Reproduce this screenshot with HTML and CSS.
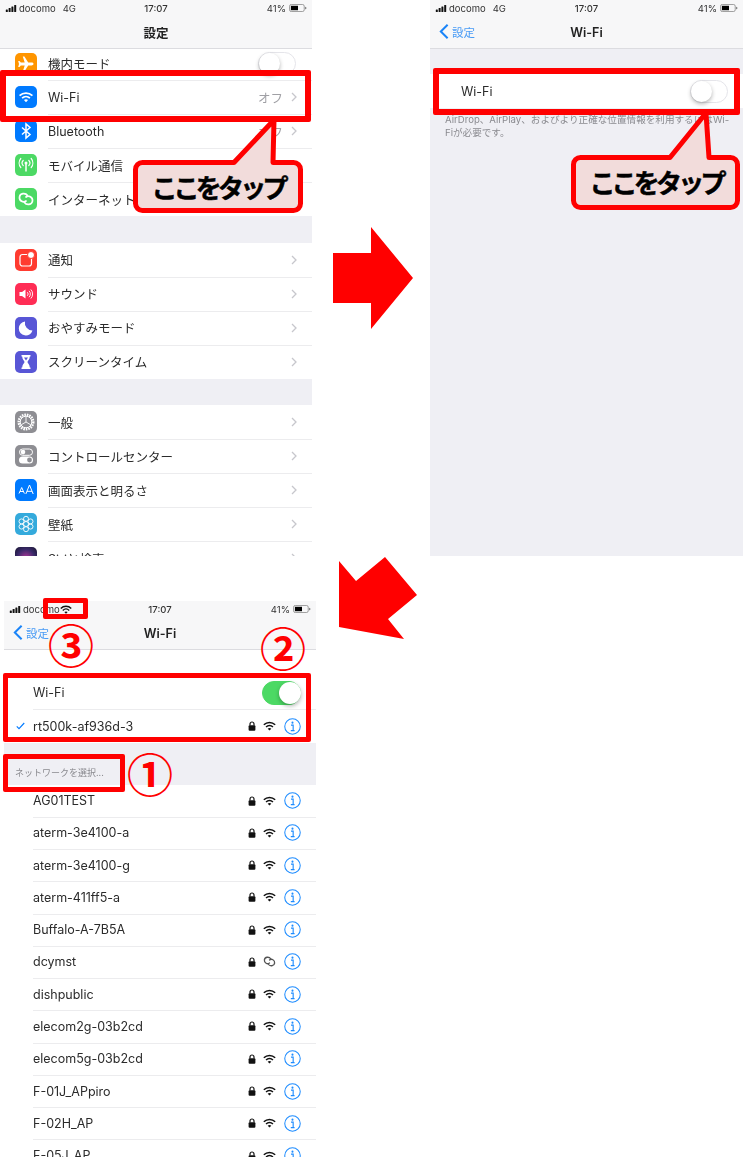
FILE: index.html
```html
<!DOCTYPE html>
<html lang="ja">
<head>
  <meta charset="UTF-8">
  <meta name="viewport" content="width=device-width, initial-scale=1.0">
  <title>Wi-Fi の設定手順</title>
  <link rel="stylesheet" href="styles.css">
</head>
<body>
  <svg class="defs" width="0" height="0">
    <symbol id="wifi" viewBox="0 0 24 18">
      <path d="M1.500 6.800C7.400 1.100 16.600 1.100 22.500 6.800" fill="none" stroke="currentColor" stroke-width="2.800"/>
      <path d="M5.600 10.800C9.300 7.300 14.700 7.300 18.400 10.800" fill="none" stroke="currentColor" stroke-width="2.800"/>
      <path d="M12 17.500L8.600 14.100C10.600 12.300 13.400 12.300 15.400 14.100Z" fill="currentColor"/>
    </symbol>
    <symbol id="lock" viewBox="0 0 8 10">
      <path d="M2 4.500V3a2 2 0 0 1 4 0v1.500" fill="none" stroke="currentColor" stroke-width="1.200"/>
      <rect x="0.600" y="4.200" width="6.800" height="5.600" rx="1" fill="currentColor"/>
    </symbol>
    <symbol id="info" viewBox="0 0 18 18">
      <circle cx="9" cy="9" r="8.200" fill="none" stroke="currentColor" stroke-width="1.100"/>
      <circle cx="9" cy="4.900" r="1.100" fill="currentColor"/>
      <path d="M7.400 7.600H9.700V13M7.200 13.400H11.200" fill="none" stroke="currentColor" stroke-width="1.200"/>
    </symbol>
    <symbol id="chain" viewBox="0 0 22 22">
      <path d="M12.500 7.500C10.500 4.500 5 5 4.500 9C4 13 8.500 15 11 13M9.500 14.500C11.500 17.500 17 17 17.500 13C18 9 13.500 7 11 9" fill="none" stroke="currentColor" stroke-width="1.700" stroke-linecap="round"/>
    </symbol>
    <symbol id="chevron" viewBox="0 0 6 10">
      <path d="M1 1L5 5L1 9" fill="none" stroke="currentColor" stroke-width="1.300"/>
    </symbol>
    <symbol id="back" viewBox="0 0 11 18">
      <path d="M9.500 1.500L2 9L9.500 16.500" fill="none" stroke="currentColor" stroke-width="2.200"/>
    </symbol>
    <symbol id="battery" viewBox="0 0 20 9">
      <rect x="0.500" y="0.500" width="16.500" height="8" rx="2" fill="none" stroke="#777" stroke-width="0.800"/>
      <rect x="2" y="2" width="8" height="5" fill="#000"/>
      <path d="M18 3V6C19 5.800 19.500 5.200 19.500 4.500S19 3.200 18 3Z" fill="#777"/>
    </symbol>
    <symbol id="signal" viewBox="0 0 10.400 7">
      <rect x="0" y="4.500" width="2" height="2.500" rx="0.500"/>
      <rect x="2.800" y="3" width="2" height="4" rx="0.500"/>
      <rect x="5.600" y="1.500" width="2" height="5.500" rx="0.500"/>
      <rect x="8.400" y="0" width="2" height="7" rx="0.500"/>
    </symbol>
  </svg>

  <div class="page">
    <div class="top-row">
      <section class="screen">
        <div class="status-bar">
          <div class="status-left"><svg class="signal"><use href="#signal"/></svg><span>docomo</span><span class="carrier-gap">4G</span></div>
          <div class="status-time">17:07</div>
          <div class="status-right"><span>41%</span><svg class="battery"><use href="#battery"/></svg></div>
        </div>
        <div class="nav-bar"><h2 class="nav-title">設定</h2></div>
        <div class="settings-group">
          <div class="row row-clipped">
            <span class="app-icon orange"><svg viewBox="0 0 22 22"><path d="M18.500 11c0-.9-1-1.400-2-1.400h-3.300L9.400 3.500H7.800l1.900 6.100H5.800L4.500 8H3.200l.8 3-.8 3h1.300l1.300-1.600h3.900l-1.900 6.100h1.600l3.800-6.100h3.300c1 0 2-.5 2-1.400z" fill="#fff"/></svg></span>
            <span class="row-label">機内モード</span>
            <span class="switch"><span class="knob"></span></span>
          </div>
          <div class="row">
            <span class="app-icon blue"><svg viewBox="0 0 22 22"><use href="#wifi" x="3.500" y="5.500" width="15" height="11" color="#fff"/></svg></span>
            <span class="row-label">Wi-Fi</span>
            <span class="row-value">オフ</span>
            <svg class="chevron"><use href="#chevron"/></svg>
          </div>
          <div class="row">
            <span class="app-icon blue"><svg viewBox="0 0 22 22"><path d="M7 7.500L15 14.500L11 18V4L15 7.500L7 14.500" fill="none" stroke="#fff" stroke-width="1.500"/></svg></span>
            <span class="row-label">Bluetooth</span>
            <span class="row-value">オフ</span>
            <svg class="chevron"><use href="#chevron"/></svg>
          </div>
          <div class="row">
            <span class="app-icon green"><svg viewBox="0 0 22 22"><g fill="none" stroke="#fff" stroke-width="1.200" stroke-linecap="round"><path d="M8.200 6.500a3.600 3.600 0 0 0 0 5M13.800 6.500a3.600 3.600 0 0 1 0 5M5.800 4.500a7 7 0 0 0 0 9M16.200 4.500a7 7 0 0 1 0 9"/></g><circle cx="11" cy="9" r="1.500" fill="#fff"/><path d="M11 9V17.500" stroke="#fff" stroke-width="1.500"/></svg></span>
            <span class="row-label">モバイル通信</span>
            <svg class="chevron"><use href="#chevron"/></svg>
          </div>
          <div class="row">
            <span class="app-icon green"><svg viewBox="0 0 22 22"><use href="#chain" width="22" height="22" color="#fff"/></svg></span>
            <span class="row-label">インターネット共有</span>
            <span class="row-value">オフ</span>
            <svg class="chevron"><use href="#chevron"/></svg>
          </div>
        </div>

        <div class="settings-group group-second">
          <div class="row">
            <span class="app-icon red"><svg viewBox="0 0 22 22"><rect x="5" y="5.500" width="11.500" height="11.500" rx="2.500" fill="none" stroke="#fff" stroke-width="1.200"/><circle cx="16" cy="6" r="3.500" fill="#fff" stroke="#ff3b30" stroke-width="1"/></svg></span>
            <span class="row-label">通知</span>
            <svg class="chevron"><use href="#chevron"/></svg>
          </div>
          <div class="row">
            <span class="app-icon pink"><svg viewBox="0 0 22 22"><path d="M4.500 9H7L10.500 6.500V15.500L7 13H4.500Z" fill="#fff"/><path d="M12.300 9.200a2.500 2.500 0 0 1 0 3.600M14 7.800a4.500 4.500 0 0 1 0 6.400M15.800 6.500a6.500 6.500 0 0 1 0 9" fill="none" stroke="#fff" stroke-width="0.900"/></svg></span>
            <span class="row-label">サウンド</span>
            <svg class="chevron"><use href="#chevron"/></svg>
          </div>
          <div class="row">
            <span class="app-icon purple"><svg viewBox="0 0 22 22"><path d="M10 4.500A7 7 0 1 0 17.500 13.500A7.500 7.500 0 0 1 10 4.500Z" fill="#fff"/></svg></span>
            <span class="row-label">おやすみモード</span>
            <svg class="chevron"><use href="#chevron"/></svg>
          </div>
          <div class="row">
            <span class="app-icon purple"><svg viewBox="0 0 22 22"><path d="M6.500 4H15.500V5.500H14.800C14.800 8.500 12.500 9.800 12.500 11C12.500 12.200 14.800 13.500 14.800 16.500H15.500V18H6.500V16.500H7.200C7.200 13.500 9.500 12.200 9.500 11C9.500 9.800 7.200 8.500 7.200 5.500H6.500Z" fill="#fff"/><path d="M9 6.500H13L11 9.500Z" fill="#5856d6"/></svg></span>
            <span class="row-label">スクリーンタイム</span>
            <svg class="chevron"><use href="#chevron"/></svg>
          </div>
        </div>

        <div class="settings-group group-third">
          <div class="row">
            <span class="app-icon gray"><svg viewBox="0 0 22 22"><circle cx="11" cy="11" r="7.300" fill="none" stroke="#fff" stroke-width="2.400" stroke-dasharray="1.600 0.900"/><circle cx="11" cy="11" r="5.800" fill="none" stroke="#fff" stroke-width="1"/><path d="M11 11L11 5.500M11 11L6.200 13.800M11 11L15.800 13.800" stroke="#fff" stroke-width="0.900"/></svg></span>
            <span class="row-label">一般</span>
            <svg class="chevron"><use href="#chevron"/></svg>
          </div>
          <div class="row">
            <span class="app-icon gray"><svg viewBox="0 0 22 22"><rect x="4.500" y="4" width="13" height="6.300" rx="3.100" fill="none" stroke="#fff" stroke-width="1"/><circle cx="8" cy="7.100" r="2.300" fill="#fff"/><rect x="4" y="11.500" width="14" height="7" rx="3.500" fill="#fff"/><circle cx="14.500" cy="15" r="2.400" fill="#8e8e93"/></svg></span>
            <span class="row-label">コントロールセンター</span>
            <svg class="chevron"><use href="#chevron"/></svg>
          </div>
          <div class="row">
            <span class="app-icon blue"><svg viewBox="0 0 22 22"><path d="M4 14.500L6.700 8.500L9.400 14.500M5 12.500H8.400M10.800 15L14.500 6L18.200 15M12 12.300H17" fill="none" stroke="#fff" stroke-width="1"/></svg></span>
            <span class="row-label">画面表示と明るさ</span>
            <svg class="chevron"><use href="#chevron"/></svg>
          </div>
          <div class="row">
            <span class="app-icon teal"><svg viewBox="0 0 22 22"><g fill="none" stroke="#fff" stroke-width="0.900"><circle cx="11" cy="5.800" r="2.500"/><circle cx="11" cy="16.200" r="2.500"/><circle cx="6.500" cy="8.400" r="2.500"/><circle cx="15.500" cy="8.400" r="2.500"/><circle cx="6.500" cy="13.600" r="2.500"/><circle cx="15.500" cy="13.600" r="2.500"/><circle cx="11" cy="11" r="2.500"/></g></svg></span>
            <span class="row-label">壁紙</span>
            <svg class="chevron"><use href="#chevron"/></svg>
          </div>
          <div class="row">
            <span class="app-icon siri"></span>
            <span class="row-label">Siriと検索</span>
            <svg class="chevron"><use href="#chevron"/></svg>
          </div>
        </div>
      </section>

      <section class="screen screen-off">
        <div class="status-bar">
          <div class="status-left"><svg class="signal"><use href="#signal"/></svg><span>docomo</span><span class="carrier-gap">4G</span></div>
          <div class="status-time">17:07</div>
          <div class="status-right"><span>41%</span><svg class="battery"><use href="#battery"/></svg></div>
        </div>
        <div class="nav-bar">
          <div class="nav-back"><svg class="back-icon"><use href="#back"/></svg><span>設定</span></div>
          <h2 class="nav-title">Wi-Fi</h2>
        </div>
        <div class="wifi-off-row">
          <span class="network-name">Wi-Fi</span>
          <span class="switch"><span class="knob"></span></span>
        </div>
        <p class="footnote">AirDrop、AirPlay、およびより正確な位置情報を利用するにはWi-<br>Fiが必要です。</p>
      </section>
    </div>

    <section class="screen screen-on">
      <div class="status-bar">
        <div class="status-left"><svg class="signal"><use href="#signal"/></svg><span>docomo</span><svg class="status-wifi"><use href="#wifi"/></svg></div>
        <div class="status-time">17:07</div>
        <div class="status-right"><span>41%</span><svg class="battery"><use href="#battery"/></svg></div>
      </div>
      <div class="nav-bar">
        <div class="nav-back"><svg class="back-icon"><use href="#back"/></svg><span>設定</span></div>
        <h2 class="nav-title">Wi-Fi</h2>
      </div>

      <div class="current-group">
        <div class="net-row net-row-toggle">
          <span class="network-name">Wi-Fi</span>
          <span class="switch switch-on"><span class="knob"></span></span>
        </div>
        <div class="net-row net-row-current">
          <svg class="check" viewBox="0 0 12 10"><path d="M1 5.500L4 8.500L11 1" fill="none" stroke="#007aff" stroke-width="1.500"/></svg>
          <span class="network-name">rt500k-af936d-3</span>
          <svg class="lock"><use href="#lock"/></svg>
          <svg class="net-wifi"><use href="#wifi"/></svg>
          <svg class="info"><use href="#info"/></svg>
        </div>
      </div>

      <div class="section-header">ネットワークを選択...</div>

      <div class="network-list">
        <div class="net-row"><span class="network-name">AG01TEST</span><svg class="lock"><use href="#lock"/></svg><svg class="net-wifi"><use href="#wifi"/></svg><svg class="info"><use href="#info"/></svg></div>
        <div class="net-row"><span class="network-name">aterm-3e4100-a</span><svg class="lock"><use href="#lock"/></svg><svg class="net-wifi"><use href="#wifi"/></svg><svg class="info"><use href="#info"/></svg></div>
        <div class="net-row"><span class="network-name">aterm-3e4100-g</span><svg class="lock"><use href="#lock"/></svg><svg class="net-wifi"><use href="#wifi"/></svg><svg class="info"><use href="#info"/></svg></div>
        <div class="net-row"><span class="network-name">aterm-411ff5-a</span><svg class="lock"><use href="#lock"/></svg><svg class="net-wifi"><use href="#wifi"/></svg><svg class="info"><use href="#info"/></svg></div>
        <div class="net-row"><span class="network-name">Buffalo-A-7B5A</span><svg class="lock"><use href="#lock"/></svg><svg class="net-wifi"><use href="#wifi"/></svg><svg class="info"><use href="#info"/></svg></div>
        <div class="net-row"><span class="network-name">dcymst</span><svg class="lock"><use href="#lock"/></svg><svg class="net-wifi net-chain" viewBox="3 4 16 14"><use href="#chain" width="22" height="22"/></svg><svg class="info"><use href="#info"/></svg></div>
        <div class="net-row"><span class="network-name">dishpublic</span><svg class="lock"><use href="#lock"/></svg><svg class="net-wifi"><use href="#wifi"/></svg><svg class="info"><use href="#info"/></svg></div>
        <div class="net-row"><span class="network-name">elecom2g-03b2cd</span><svg class="lock"><use href="#lock"/></svg><svg class="net-wifi"><use href="#wifi"/></svg><svg class="info"><use href="#info"/></svg></div>
        <div class="net-row"><span class="network-name">elecom5g-03b2cd</span><svg class="lock"><use href="#lock"/></svg><svg class="net-wifi"><use href="#wifi"/></svg><svg class="info"><use href="#info"/></svg></div>
        <div class="net-row"><span class="network-name">F-01J_APpiro</span><svg class="lock"><use href="#lock"/></svg><svg class="net-wifi"><use href="#wifi"/></svg><svg class="info"><use href="#info"/></svg></div>
        <div class="net-row"><span class="network-name">F-02H_AP</span><svg class="lock"><use href="#lock"/></svg><svg class="net-wifi"><use href="#wifi"/></svg><svg class="info"><use href="#info"/></svg></div>
        <div class="net-row"><span class="network-name">F-05J_AP</span><svg class="lock"><use href="#lock"/></svg><svg class="net-wifi"><use href="#wifi"/></svg><svg class="info"><use href="#info"/></svg></div>
      </div>
    </section>

    <!-- annotations drawn on top of the screenshots -->
    <div class="callout callout-a">
      <svg class="callout-shape" width="176" height="104" viewBox="0 0 176 104"><path d="M12.500 48.500H104L144 6L143 48.500H163.500a7 7 0 0 1 7 7V89.500a7 7 0 0 1-7 7H12.500a7 7 0 0 1-7-7V55.500a7 7 0 0 1 7-7Z" fill="#f2dcdb" stroke="#f00" stroke-width="5" stroke-linejoin="round"/></svg>
      <span class="callout-text">ここをタップ</span>
    </div>
    <div class="callout callout-b">
      <svg class="callout-shape" width="176" height="104" viewBox="0 0 176 104"><path d="M12.500 48.500H102L138 4L141 48.500H162.500a7 7 0 0 1 7 7V91.500a7 7 0 0 1-7 7H12.500a7 7 0 0 1-7-7V55.500a7 7 0 0 1 7-7Z" fill="#f2dcdb" stroke="#f00" stroke-width="5" stroke-linejoin="round"/></svg>
      <span class="callout-text">ここをタップ</span>
    </div>

    <div class="frame frame-wifi-row"></div>
    <div class="frame frame-off-row"></div>
    <div class="frame frame-status"></div>
    <div class="frame frame-current"></div>
    <div class="frame frame-header"></div>

    <span class="step step-1">①</span>
    <span class="step step-2">②</span>
    <span class="step step-3">③</span>

    <svg class="arrow arrow-right" width="84" height="106" viewBox="0 0 84 106"><polygon points="1,27 39,27 39,1 81,52 39,103 39,77 1,77" fill="#f00"/></svg>
    <svg class="arrow arrow-down" width="84" height="88" viewBox="0 0 84 88"><polygon points="3,6 20,26 49,2 81,40 52,64 68,84 3,72" fill="#f00"/></svg>
  </div>
</body>
</html>
```

FILE: styles.css
```css
* {
  box-sizing: border-box;
  margin: 0;
  padding: 0;
}

body {
  font-family: Inter, "Noto Sans CJK JP", sans-serif;
  background-color: white;
  color: #111;
}

.defs {
  position: absolute;
}

.page {
  position: relative;
  width: 743px;
  height: 1157px;
  overflow: hidden;
}

.top-row {
  display: flex;
  justify-content: space-between;
}

/* the source pictures are soft, upscaled phone captures */
.screen {
  width: 312px;
  height: 556px;
  background-color: #efeff4;
  overflow: hidden;
  filter: blur(0.35px);
}

.screen-off {
  width: 313px;
}

.screen-on {
  margin: 45px 0 0 4px;
  background-color: white;
}

/* status bar */

.status-bar {
  display: flex;
  justify-content: space-between;
  align-items: center;
  height: 16px;
  padding: 0 5px;
  background-color: #f7f7f8;
  font-size: 9.500px;
  color: #333;
  position: relative;
}

.status-left,
.status-right {
  display: flex;
  align-items: center;
}

.status-time {
  position: absolute;
  left: 0;
  right: 0;
  text-align: center;
  font-weight: 500;
}

.signal {
  width: 12px;
  height: 7px;
  margin-right: 2px;
  fill: #111;
}

.carrier-gap {
  margin-left: 7px;
}

.status-wifi {
  width: 12px;
  height: 9px;
  color: #111;
}

.battery {
  width: 18px;
  height: 8px;
  margin-left: 3px;
}

/* nav bar */

.nav-bar {
  position: relative;
  display: flex;
  align-items: center;
  justify-content: center;
  height: 33px;
  background-color: #f7f7f8;
  border-bottom: 1px solid #dcdce0;
}

.nav-title {
  font-size: 12.500px;
  font-weight: 600;
  color: #222;
}

.nav-back {
  position: absolute;
  left: 9px;
  top: 7px;
  display: flex;
  align-items: center;
  gap: 3px;
  font-size: 11.500px;
  color: #4a9cf5;
}

.back-icon {
  width: 10px;
  height: 17px;
  color: #1a84f8;
}

/* settings list */

.settings-group {
  background-color: white;
}

.group-second {
  margin-top: 26.500px;
}

.group-third {
  margin-top: 26.500px;
}

.row {
  display: flex;
  align-items: center;
  height: 34px;
  padding: 0 15px;
  position: relative;
  font-size: 12.500px;
}

.row + .row::before {
  content: "";
  position: absolute;
  left: 48px;
  right: 0;
  top: 0;
  border-top: 1px solid #ececee;
}

.row-clipped {
  height: 31px;
  padding-bottom: 2px;
}

.row-label {
  margin-left: 11px;
  color: #2b2b2b;
}

.row-value {
  margin-left: auto;
  color: #a0a0a5;
}

.chevron {
  width: 6px;
  height: 10px;
  margin-left: 8px;
  color: #c7c7cc;
}

.row-label + .chevron {
  margin-left: auto;
}

.row .switch {
  margin-left: auto;
  margin-right: 1px;
}

.app-icon {
  width: 22px;
  height: 22px;
  border-radius: 5px;
  flex-shrink: 0;
  display: block;
}

.app-icon svg {
  display: block;
  width: 22px;
  height: 22px;
}

.orange { background-color: #ff9500; }
.blue { background-color: #007aff; }
.green { background-color: #4cd964; }
.red { background-color: #ff3b30; }
.pink { background-color: #ff2d55; }
.purple { background-color: #5856d6; }
.gray { background-color: #8e8e93; }
.teal { background-color: #34aadc; }
.siri { background: radial-gradient(circle, #b0379a 0%, #3a2a6a 55%, #17142c 100%); }

/* switches */

.switch {
  display: block;
  position: relative;
  width: 38px;
  height: 23px;
  border-radius: 12px;
  background-color: white;
  border: 1px solid #e5e5ea;
}

.knob {
  position: absolute;
  left: 0;
  top: 0;
  width: 21px;
  height: 21px;
  border-radius: 50%;
  background-color: white;
  box-shadow: 0 2px 4px rgba(0,0,0,0.3);
}

.switch-on {
  width: 39px;
  height: 24px;
  background-color: #4cd964;
  border-color: #4cd964;
}

.switch-on .knob {
  left: 16px;
  width: 22px;
  height: 22px;
}

/* wi-fi off screen */

.wifi-off-row {
  display: flex;
  align-items: center;
  justify-content: space-between;
  height: 34px;
  margin-top: 25px;
  padding: 0 15px 0 31px;
  background-color: white;
}

.footnote {
  padding: 6px 0 0 15px;
  font-size: 9.600px;
  line-height: 12.500px;
  color: #8a8a8f;
  white-space: nowrap;
}

/* wi-fi on screen */

.current-group {
  margin-top: 26px;
  background-color: white;
}

.net-row {
  display: flex;
  align-items: center;
  height: 32.270px;
  padding: 0 15px 0 29px;
  position: relative;
}

.net-row + .net-row::before {
  content: "";
  position: absolute;
  left: 29px;
  right: 0;
  top: 0;
  border-top: 1px solid #ececee;
}

.net-row-toggle {
  height: 33px;
  justify-content: space-between;
}

.net-row-current {
  height: 34px;
}

.network-name {
  font-size: 12.500px;
  color: #2b2b2b;
  margin-right: auto;
}

.check {
  position: absolute;
  left: 12px;
  width: 9px;
  height: 8px;
}

.lock {
  width: 8px;
  height: 10px;
  color: #111;
  margin-right: 7px;
}

.net-wifi {
  width: 13px;
  height: 10px;
  color: #111;
  margin-right: 8px;
}

.net-chain {
  color: #555;
  height: 11px;
}

.info {
  width: 17px;
  height: 17px;
  color: #1e8cff;
}

.section-header {
  height: 41.500px;
  padding: 23px 0 0 11px;
  background-color: #efeff4;
  font-size: 9px;
  color: #8a8a8f;
}

.network-list {
  background-color: white;
}

/* annotations */

.frame {
  position: absolute;
  border: 5px solid #f00;
  border-radius: 2px;
}

.frame-wifi-row { left: 0; top: 70px; width: 311px; height: 52px; border-width: 6px; }
.frame-off-row { left: 433px; top: 68px; width: 307px; height: 47px; border-width: 6px; }
.frame-status { left: 43px; top: 598px; width: 45px; height: 21px; }
.frame-current { left: 3px; top: 673px; width: 308px; height: 69px; }
.frame-header { left: 3px; top: 754px; width: 122px; height: 38px; }

.callout {
  position: absolute;
  width: 176px;
  height: 104px;
}

.callout-a { left: 130px; top: 114px; }
.callout-b { left: 568px; top: 109px; }

.callout-shape {
  position: absolute;
  left: 0;
  top: 0;
}

.callout-text {
  position: absolute;
  left: 5px;
  right: 5px;
  top: 47px;
  height: 50px;
  display: flex;
  align-items: center;
  justify-content: center;
  font-size: 26px;
  font-weight: 700;
  letter-spacing: -3.800px;
  -webkit-text-stroke: 0.5px black;
  color: black;
}

.step {
  position: absolute;
  font-family: "Noto Sans CJK JP", sans-serif;
  font-size: 46px;
  font-weight: 700;
  line-height: 46px;
  color: #f00;
}

.step-1 { left: 127px; top: 749px; }
.step-2 { left: 260px; top: 623px; }
.step-3 { left: 48px; top: 620px; }

.arrow {
  position: absolute;
}

.arrow-right { left: 332px; top: 226px; }
.arrow-down { left: 336px; top: 555px; }
```
